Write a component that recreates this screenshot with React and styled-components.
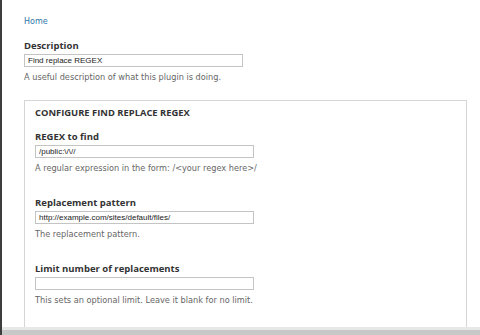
import React from "react";
import styled, { createGlobalStyle } from "styled-components";

const fields = [
  {
    label: "REGEX to find",
    value: "/public:\\/\\//",
    help: "A regular expression in the form: /<your regex here>/",
  },
  {
    label: "Replacement pattern",
    value: "http://example.com/sites/default/files/",
    help: "The replacement pattern.",
  },
  {
    label: "Limit number of replacements",
    value: "",
    help: "This sets an optional limit. Leave it blank for no limit.",
  },
];

export default function App() {
  return (
    <>
      <GlobalStyle />
      <Page>
        <Content>
          <Crumb href="#">Home</Crumb>
          <Item>
            <Label>Description</Label>
            <Input defaultValue="Find replace REGEX" />
            <Help>A useful description of what this plugin is doing.</Help>
          </Item>
          <Fieldset>
            <Legend>CONFIGURE FIND REPLACE REGEX</Legend>
            {fields.map(({ label, value, help }) => (
              <Item key={label} $gap="24px">
                <Label>{label}</Label>
                <Input defaultValue={value} />
                <Help>{help}</Help>
              </Item>
            ))}
          </Fieldset>
        </Content>
        <Bottom />
      </Page>
    </>
  );
}

const GlobalStyle = createGlobalStyle`
  html, body {
    margin: 0;
    padding: 0;
    background: #fff;
  }
`;

const Page = styled.div`
  width: 480px;
  height: 335px;
  overflow: hidden;
  display: flex;
  flex-direction: column;
  border-left: 2px solid #3d3d3d;
  box-sizing: border-box;
  font-family: "DejaVu Sans", sans-serif;
`;

const Content = styled.div`
  flex: 1;
  overflow: hidden;
  padding: 17px 13px 0 22px;
`;

const Crumb = styled.a`
  display: block;
  font-size: 8px;
  line-height: 10px;
  color: #2f78a8;
  text-decoration: none;
  margin-bottom: 13px;
`;

const Item = styled.div`
  margin-bottom: ${(p) => p.$gap || "18px"};
`;

const Label = styled.div`
  font-family: "Open Sans", "DejaVu Sans", sans-serif;
  font-size: 9.5px;
  font-weight: bold;
  line-height: 12px;
  color: #333;
  margin-bottom: 2px;
`;

const Input = styled.input`
  display: block;
  box-sizing: border-box;
  width: 219px;
  height: 13px;
  margin: 0;
  padding: 0 3px;
  border: 1px solid #c4c4c4;
  font-family: "Liberation Sans", Arial, sans-serif;
  font-size: 8px;
  color: #222;
  background: #fff;
  outline: none;
`;

const Help = styled.div`
  font-size: 8.2px;
  line-height: 10px;
  color: #666;
  margin-top: 5px;
`;

const Fieldset = styled.div`
  border: 1px solid #d6d6d6;
  padding: 6px 10px 0;
`;

const Legend = styled.div`
  font-family: "Open Sans", "DejaVu Sans", sans-serif;
  font-size: 9.4px;
  font-weight: bold;
  line-height: 12px;
  color: #333;
  margin-bottom: 12px;
`;

const Bottom = styled.div`
  height: 5px;
  flex-shrink: 0;
  background: #c8c8c8;
  border-top: 3px solid #e8e8e8;
`;
